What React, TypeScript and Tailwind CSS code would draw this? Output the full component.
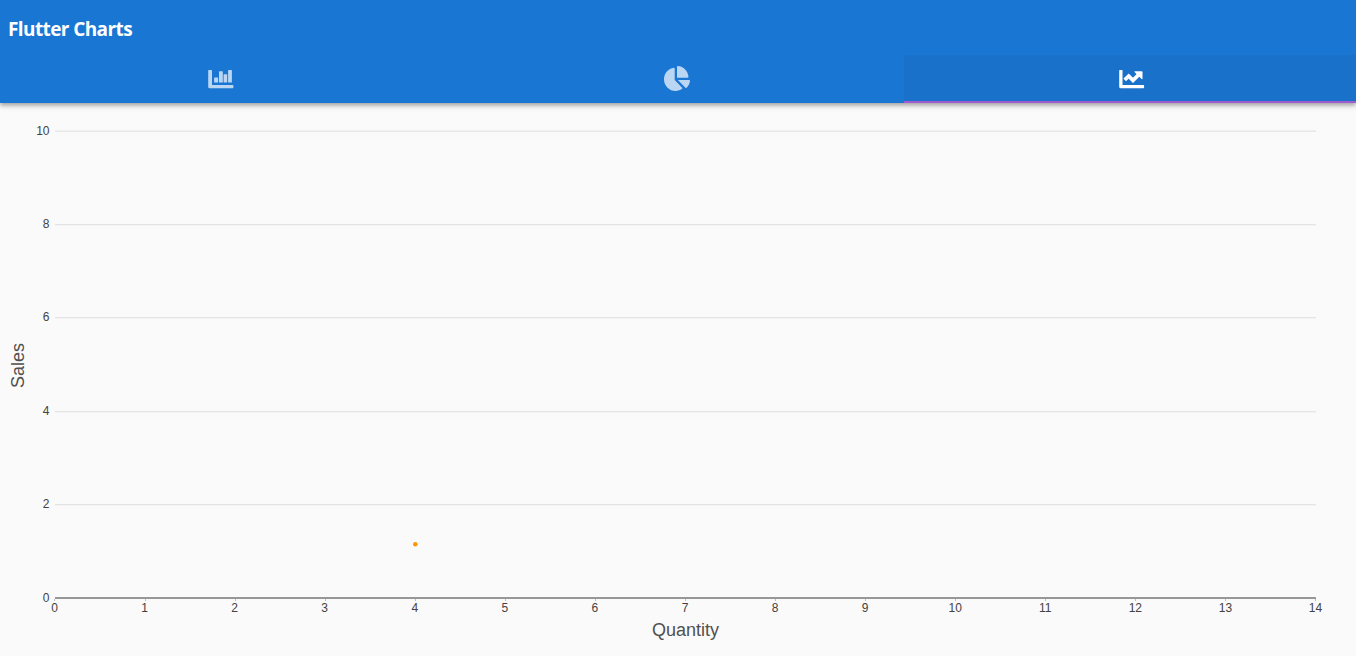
import type { ReactNode } from "react";
import { FaChartPie } from "react-icons/fa";

const LEFT = 55;
const RIGHT = 1316;
const xTicks = Array.from({ length: 15 }, (_, i) => i);
const yTicks = [
  { value: 0, y: 495 },
  { value: 2, y: 401 },
  { value: 4, y: 308 },
  { value: 6, y: 214 },
  { value: 8, y: 121 },
  { value: 10, y: 28 },
];
const xAt = (v: number) => LEFT + (v * (RIGHT - LEFT)) / 14;

function BarIcon() {
  return (
    <svg width="26" height="19" viewBox="0 0 26 19" fill="currentColor" className="mr-[11px]">
      <path d="M.8 0h2.6q.6 0 .6.6V15h20.8q.6 0 .6.6v1.8q0 .8-.6.8H1.8Q.2 18.2.2 16.7V.6Q.2 0 .8 0z" />
      <rect x="6.1" y="7.4" width="4" height="5" rx=".5" />
      <rect x="11" y="1.2" width="3.8" height="11.2" rx=".5" />
      <rect x="15.6" y="4.2" width="3.6" height="8.2" rx=".5" />
      <rect x="20.1" y="0" width="3.8" height="12.4" rx=".5" />
    </svg>
  );
}

function LineIcon() {
  return (
    <svg width="26" height="19" viewBox="0 0 26 19" fill="currentColor">
      <path d="M.8 0h2.1q.6 0 .6.6V15h21q.6 0 .6.6v1.8q0 .8-.6.8H1.8Q.2 18.2.2 16.7V.6Q.2 0 .8 0z" />
      <path d="M5.7 9.8L9.7 6.2L14 10.3L20 4.4" fill="none" stroke="currentColor" strokeWidth="3.8" />
      <path d="M15.9 1.2h6.7q.9 0 .9.8v6.7q0 1-.9.3l-7.1-7.1q-.5-.7.4-.7z" />
    </svg>
  );
}

function Tab({ active = false, children }: { active?: boolean; children: ReactNode }) {
  return (
    <button
      className={
        active
          ? "flex h-12 w-[452px] items-center justify-center border-b-2 border-[#a05bd0] bg-[#1971ca] pt-[2px] pl-[3px] text-white"
          : "flex h-12 w-[452px] items-center justify-center border-b-2 border-transparent pt-[2px] text-[#bad6f2]"
      }
    >
      {children}
    </button>
  );
}

function LineChart() {
  return (
    <svg width="1356" height="553" className="block" fontFamily="'Liberation Sans', Arial, sans-serif">
      {yTicks.slice(1).map(({ value, y }) => (
        <rect key={value} x={LEFT} y={value === 10 ? y - 0.5 : y} width={RIGHT - LEFT} height="1.3" fill="#e4e4e4" />
      ))}
      {yTicks.map(({ value, y }) => (
        <text key={value} x="49.5" y={y + 4} textAnchor="end" fontSize="12" fill="#424242">
          {value}
        </text>
      ))}
      {xTicks.map((v) => (
        <g key={v}>
          <rect x={Math.floor(xAt(v)) - (v === 0 || v === 14 ? 1 : 0)} y="496" width="1" height="2" fill="#bdbdbd" />
          <text x={xAt(v) - 0.5} y="509" textAnchor="middle" fontSize="12" fill="#424242">
            {v}
          </text>
        </g>
      ))}
      <rect x={LEFT} y="494" width={RIGHT - LEFT} height="2" fill="#979797" />
      <circle cx="415.3" cy="441.3" r="2.3" fill="#ff9800" />
      <text x="685.5" y="533" textAnchor="middle" fontSize="18" fill="#505050">
        Quantity
      </text>
      <text transform="translate(24 262.5) rotate(-90)" textAnchor="middle" fontSize="18" fill="#505050">
        Sales
      </text>
    </svg>
  );
}

export default function App() {
  return (
    <div className="flex h-[656px] w-[1356px] flex-col overflow-hidden bg-[#fafafa]">
      <header className="z-10 flex h-[103px] shrink-0 flex-col bg-[#1976d3] shadow-[0_2px_4px_rgba(0,0,0,0.28),0_4px_5px_rgba(0,0,0,0.1)]">
        <div className="flex h-[55px] items-center pt-[3px] pl-[8px]">
          <h1 className="font-['Open_Sans',sans-serif] text-[19px] font-bold tracking-[-0.6px] text-white">Flutter Charts</h1>
        </div>
        <nav className="flex">
          <Tab>
            <BarIcon />
          </Tab>
          <Tab>
            <FaChartPie className="mr-[3px] h-[25px] w-[26px] -mt-px" preserveAspectRatio="none" />
          </Tab>
          <Tab active>
            <LineIcon />
          </Tab>
        </nav>
      </header>
      <main>
        <LineChart />
      </main>
    </div>
  );
}
